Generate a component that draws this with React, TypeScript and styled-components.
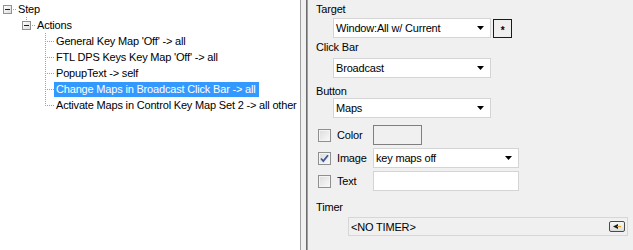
import React from "react";
import styled, { createGlobalStyle } from "styled-components";

const Global = createGlobalStyle`
  html, body { margin: 0; padding: 0; }
  body {
    width: 633px; height: 250px; overflow: hidden;
    font-family: "Liberation Sans", Arial, sans-serif;
    font-size: 11px; color: #000; background: #f0f0f0;
    letter-spacing: -0.18px;
  }
  #root { width: 633px; height: 250px; }
`;

const Window = styled.div`
  display: flex;
  width: 633px;
  height: 250px;
`;

const TreePane = styled.div`
  width: 300px;
  height: 250px;
  background: #fff;
  border-right: 1px solid #a0a0a0;
  padding-top: 1px;
  box-sizing: content-box;
  overflow: hidden;
`;

const Splitter = styled.div`
  width: 5px;
  background: #f0f0f0;
`;

const DetailPane = styled.div`
  flex: 1;
  display: flex;
  flex-direction: column;
  border-left: 1px solid #6d6d6d;
  box-shadow: inset 1px 0 0 #a0a0a0;
  padding: 3px 0 0 9px;
  background: #f0f0f0;
`;

const TreeRow = styled.div<{ $level: number }>`
  display: flex;
  align-items: center;
  height: 16px;
  padding-left: ${(p) => p.$level * 19}px;
`;

const Gutter = styled.svg`
  flex: none;
  display: block;
  width: 16px;
  height: 16px;
`;

const NodeLabel = styled.span<{ $selected?: boolean }>`
  display: inline-block;
  white-space: nowrap;
  line-height: 15px;
  height: 15px;
  padding: 0 3px 0 2px;
  background: ${(p) => (p.$selected ? "#3399ff" : "transparent")};
  color: ${(p) => (p.$selected ? "#fff" : "#000")};
`;

const DOT = "#a0a0a0";

function dotsV(x: number, y0: number, y1: number) {
  const out: React.ReactNode[] = [];
  for (let y = y0; y <= y1; y += 2) out.push(<rect key={`v${x}-${y}`} x={x} y={y} width={1} height={1} fill={DOT} />);
  return out;
}
function dotsH(y: number, x0: number, x1: number) {
  const out: React.ReactNode[] = [];
  for (let x = x0; x <= x1; x += 2) out.push(<rect key={`h${y}-${x}`} x={x} y={y} width={1} height={1} fill={DOT} />);
  return out;
}

type Kind = "root" | "branch" | "leaf" | "lastLeaf";

const TreeGutter: React.FC<{ kind: Kind }> = ({ kind }) => {
  const expander = kind === "root" || kind === "branch";
  return (
    <Gutter viewBox="0 0 16 16">
      <defs>
        <linearGradient id="exg" x1="0" y1="0" x2="1" y2="1">
          <stop offset="0" stopColor="#ffffff" />
          <stop offset="1" stopColor="#dcdcdc" />
        </linearGradient>
      </defs>
      {kind === "branch" && dotsV(7, 0, 3)}
      {kind === "leaf" && dotsV(7, 0, 15)}
      {kind === "lastLeaf" && dotsV(7, 0, 8)}
      {(kind === "leaf" || kind === "lastLeaf") && dotsH(8, 9, 15)}
      {expander && (
        <>
          {dotsH(8, 13, 15)}
          <rect x={3.5} y={4.5} width={8} height={8} fill="url(#exg)" stroke="#919191" strokeWidth={1} />
          <rect x={5} y={8} width={5} height={1} fill="#1e1e1e" />
        </>
      )}
    </Gutter>
  );
};

const FieldLabel = styled.div<{ $mt: number }>`
  line-height: 13px;
  height: 13px;
  margin-top: ${(p) => p.$mt}px;
`;

const ComboRow = styled.div<{ $mt: number }>`
  display: flex;
  align-items: flex-start;
  gap: 2px;
  margin-left: 17px;
  margin-top: ${(p) => p.$mt}px;
`;

const ComboBox = styled.div<{ $w: number }>`
  box-sizing: border-box;
  width: ${(p) => p.$w}px;
  height: 20px;
  background: #fff;
  border: 1px solid #d4d4d4;
  display: flex;
  align-items: center;
  justify-content: space-between;
  padding: 0 6px 0 2px;
  white-space: nowrap;
`;

const StarButton = styled.div`
  box-sizing: border-box;
  width: 19px;
  height: 19px;
  margin-top: 1px;
  border: 1px solid #1a1a1a;
  background: #efefef;
  display: flex;
  align-items: center;
  justify-content: center;
  font-size: 10px;
  font-weight: bold;
  padding-top: 3px;
`;

const Arrow = () => (
  <svg width="7" height="4" viewBox="0 0 7 4">
    <path d="M0 0h7L3.5 4z" fill="#000" />
  </svg>
);

const Combo: React.FC<{ w: number; value: string }> = ({ w, value }) => (
  <ComboBox $w={w}>
    <span>{value}</span>
    <Arrow />
  </ComboBox>
);

const CheckRow = styled.div<{ $mt: number }>`
  display: grid;
  grid-template-columns: 57px auto;
  align-items: center;
  height: 20px;
  margin-top: ${(p) => p.$mt}px;
`;

const CheckCell = styled.label`
  display: flex;
  align-items: center;
  gap: 6px;
  padding-left: 2px;
`;

const CheckBoxFrame = styled.span`
  box-sizing: border-box;
  width: 13px;
  height: 13px;
  border: 1px solid #8e8f8f;
  background: linear-gradient(135deg, #dcdcdc 0%, #f4f4f4 80%, #ffffff 100%);
  box-shadow: inset 0 0 0 1px #f4f4f4;
  display: flex;
  align-items: center;
  justify-content: center;
`;

const Check: React.FC<{ checked?: boolean }> = ({ checked }) => (
  <CheckBoxFrame>
    {checked && (
      <svg width="9" height="9" viewBox="0 0 9 9">
        <path d="M1 4.5 L3.3 7 L8 1.2" fill="none" stroke="#3c5a9a" strokeWidth="1.8" />
      </svg>
    )}
  </CheckBoxFrame>
);

const ColorSwatch = styled.div`
  box-sizing: border-box;
  width: 49px;
  height: 20px;
  border: 1px solid #7f7f7f;
  background: #f0f0f0;
`;

const TextInput = styled.div`
  box-sizing: border-box;
  width: 146px;
  height: 20px;
  border: 1px solid #d4d4d4;
  background: #fff;
`;

const TimerBox = styled.div`
  box-sizing: border-box;
  width: 280px;
  height: 19px;
  margin: 3px 0 0 32px;
  border: 1px solid #d7d7d7;
  background: #f0f0f0;
  display: flex;
  align-items: center;
  justify-content: space-between;
  padding: 0 2px 0 2px;
`;

const MiniButton = styled.div`
  box-sizing: border-box;
  width: 16px;
  height: 11px;
  border: 1px solid #4a4a4a;
  border-radius: 2px;
  background: linear-gradient(#f7f7f7, #dcdcdc);
  display: flex;
  align-items: center;
  justify-content: center;
`;

const nodes: { text: string; level: number; kind: Kind; selected?: boolean }[] = [
  { text: "Step", level: 0, kind: "root" },
  { text: "Actions", level: 1, kind: "branch" },
  { text: "General Key Map 'Off' -> all", level: 2, kind: "leaf" },
  { text: "FTL DPS Keys Key Map 'Off' -> all", level: 2, kind: "leaf" },
  { text: "PopupText -> self", level: 2, kind: "leaf" },
  { text: "Change Maps in Broadcast Click Bar -> all", level: 2, kind: "leaf", selected: true },
  { text: "Activate Maps in Control Key Map Set 2 -> all other", level: 2, kind: "lastLeaf" },
];

export default function App() {
  return (
    <>
      <Global />
      <Window>
        <TreePane>
          {nodes.map((n) => (
            <TreeRow key={n.text} $level={n.level}>
              <TreeGutter kind={n.kind} />
              <NodeLabel $selected={n.selected}>{n.text}</NodeLabel>
            </TreeRow>
          ))}
        </TreePane>
        <Splitter />
        <DetailPane>
          <FieldLabel $mt={0}>Target</FieldLabel>
          <ComboRow $mt={2}>
            <Combo w={158} value="Window:All w/ Current" />
            <StarButton>*</StarButton>
          </ComboRow>
          <FieldLabel $mt={3}>Click Bar</FieldLabel>
          <ComboRow $mt={4}>
            <Combo w={158} value="Broadcast" />
          </ComboRow>
          <FieldLabel $mt={7}>Button</FieldLabel>
          <ComboRow $mt={0}>
            <Combo w={158} value="Maps" />
          </ComboRow>
          <CheckRow $mt={7}>
            <CheckCell>
              <Check />
              <span>Color</span>
            </CheckCell>
            <ColorSwatch />
          </CheckRow>
          <CheckRow $mt={3}>
            <CheckCell>
              <Check checked />
              <span>Image</span>
            </CheckCell>
            <Combo w={146} value="key maps off" />
          </CheckRow>
          <CheckRow $mt={3}>
            <CheckCell>
              <Check />
              <span>Text</span>
            </CheckCell>
            <TextInput />
          </CheckRow>
          <FieldLabel $mt={10}>Timer</FieldLabel>
          <TimerBox>
            <span>&lt;NO TIMER&gt;</span>
            <MiniButton>
              <svg width="8" height="5" viewBox="0 0 8 5">
                <path d="M0 2.5 L5 0 L5 5 Z" fill="#1a1a1a" />
                <rect x="4" y="2" width="4" height="1" fill="#d9a21b" />
              </svg>
            </MiniButton>
          </TimerBox>
        </DetailPane>
      </Window>
    </>
  );
}
